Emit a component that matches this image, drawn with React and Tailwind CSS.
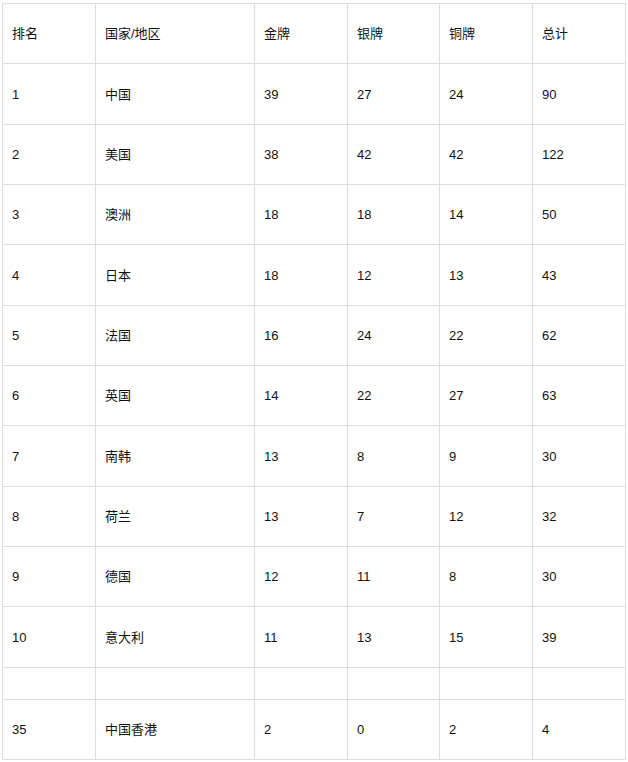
import React from 'react';

const headers = ['排名', '国家/地区', '金牌', '银牌', '铜牌', '总计'];

const rows = [
    ['1', '中国', '39', '27', '24', '90'],
    ['2', '美国', '38', '42', '42', '122'],
    ['3', '澳洲', '18', '18', '14', '50'],
    ['4', '日本', '18', '12', '13', '43'],
    ['5', '法国', '16', '24', '22', '62'],
    ['6', '英国', '14', '22', '27', '63'],
    ['7', '南韩', '13', '8', '9', '30'],
    ['8', '荷兰', '13', '7', '12', '32'],
    ['9', '德国', '12', '11', '8', '30'],
    ['10', '意大利', '11', '13', '15', '39'],
    null,
    ['35', '中国香港', '2', '0', '2', '4'],
];

const widths = ['w-[93px]', 'w-[159px]', 'w-[93px]', 'w-[92px]', 'w-[93px]', 'w-[93px]'];

const App = () => {
    return (
        <div className="bg-white pt-[3px] pl-[2px] font-['Liberation_Sans','Noto_Sans_CJK_SC',sans-serif] text-[13px] text-[#111]">
            <table className="table-fixed border-collapse w-[624px]">
                <colgroup>
                    {widths.map((w, i) => (
                        <col key={i} className={w} />
                    ))}
                </colgroup>
                <thead>
                    <tr className="h-[60.33px]">
                        {headers.map((h) => (
                            <th key={h} className="border border-[#dddddd] px-[9px] pt-px text-left font-normal align-middle">
                                {h}
                            </th>
                        ))}
                    </tr>
                </thead>
                <tbody>
                    {rows.map((row, i) =>
                        row ? (
                            <tr key={i} className="h-[60.33px]">
                                {row.map((cell, j) => (
                                    <td key={j} className="border border-[#dddddd] px-[9px] pt-px align-middle">
                                        {cell}
                                    </td>
                                ))}
                            </tr>
                        ) : (
                            <tr key={i} className="h-[32px]">
                                {headers.map((h) => (
                                    <td key={h} className="border border-[#dddddd]"></td>
                                ))}
                            </tr>
                        )
                    )}
                </tbody>
            </table>
        </div>
    );
};

export default App;
